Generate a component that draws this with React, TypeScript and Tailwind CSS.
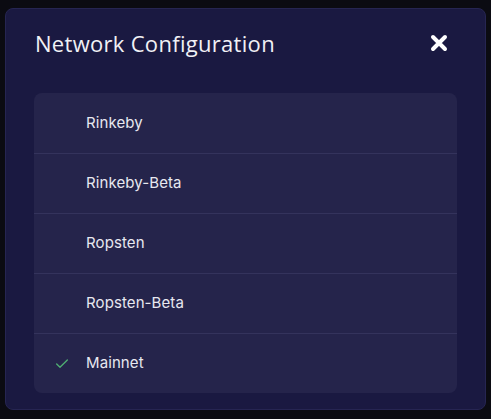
import { Check } from "lucide-react";

const networks = ["Rinkeby", "Rinkeby-Beta", "Ropsten", "Ropsten-Beta", "Mainnet"];

export default function App() {
  const selected = "Mainnet";
  return (
    <div className="w-[491px] h-[419px] bg-[#0b0b12] pt-[8px] pl-[5px]">
      <div className="w-[481px] h-[402px] rounded-lg border border-[#262552] bg-[#1a1941] px-[28px]">
        <div className="flex items-center justify-between h-[68px] pl-[1px] pr-[9px]">
          <h2 className="text-[22px] text-[#f1f1f5] font-['Open_Sans',sans-serif] tracking-[0.3px]">
            Network Configuration
          </h2>
          <svg width="18" height="18" viewBox="0 0 18 18">
            <path d="M3 3 L15 15 M15 3 L3 15" stroke="#ffffff" strokeWidth="4" strokeLinecap="round" />
          </svg>
        </div>
        <div className="mt-[16px] rounded-lg bg-[#25244b] overflow-hidden font-['Inter',sans-serif]">
          {networks.map((n, i) => (
            <div
              key={n}
              className={`flex items-center h-[60px] ${i > 0 ? "border-t border-[#34335c]" : ""}`}
            >
              <div className="w-[52px] flex justify-end pr-[16px]">
                {n === selected && <Check size={16} strokeWidth={2} className="text-[#4fae72]" />}
              </div>
              <span className="text-[15px] text-[#e8e8f0] tracking-[0.1px]">{n}</span>
            </div>
          ))}
        </div>
      </div>
    </div>
  );
}
